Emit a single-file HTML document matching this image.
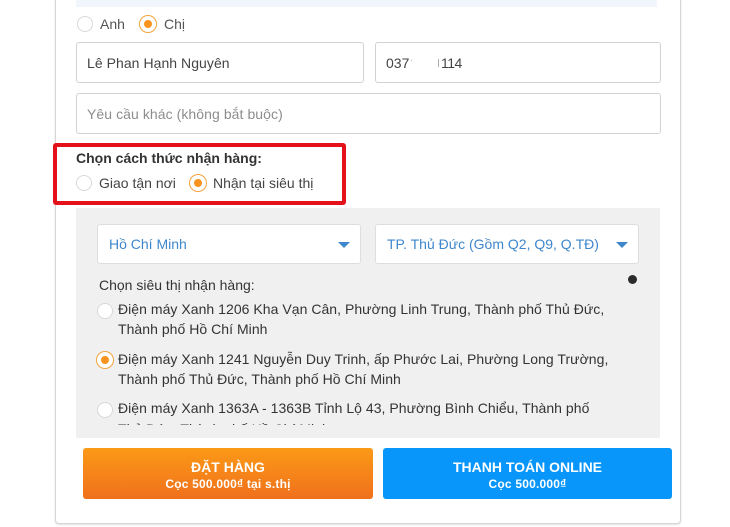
<!DOCTYPE html>
<html lang="vi">
<head>
<meta charset="utf-8">
<style>
html,body{margin:0;padding:0;background:#fff}
body{width:730px;height:527px;position:relative;overflow:hidden;font-family:"Liberation Sans",Arial,sans-serif;font-size:14px;color:#333}
#w{position:absolute;left:0;top:0;width:730px;height:527px;overflow:hidden;filter:blur(.35px)}
.a{position:absolute}
.t{position:absolute;white-space:nowrap;line-height:20px}
.s{letter-spacing:.04px}
.box{position:absolute;box-sizing:border-box;background:#fff;border:1px solid #d2d2d2;border-radius:3px}
.r{position:absolute;box-sizing:border-box;width:16px;height:16px;border-radius:50%;background:#fff;border:1px solid #d8d8d8}
.r.on{width:18px;height:18px;border:1.5px solid #f3a43f;margin:-1px 0 0 -1px}
.r.on:after{content:"";position:absolute;left:3.5px;top:3.5px;width:8px;height:8px;border-radius:50%;background:#f7931e}
.arr{position:absolute;width:0;height:0;border-left:6px solid transparent;border-right:6px solid transparent;border-top:6px solid #3f87cc}
.btn{position:absolute;border-radius:3px;color:#fff;text-align:center;font-weight:bold;box-sizing:border-box}
.btn b{display:block;font-size:14px;line-height:18px;margin-top:10px}
.btn span{display:block;font-size:12px;line-height:16px;letter-spacing:.2px}
</style>
</head>
<body>
<div id="w">
<div class="a" style="left:55px;top:-10px;width:626px;height:534px;box-sizing:border-box;border:1px solid #d6d6d6;border-radius:4px;background:#fff;box-shadow:0 1px 2px rgba(0,0,0,.12)"></div>
<div class="a" style="left:76px;top:0;width:581px;height:7px;background:#f1f6fd"></div>

<div class="r" style="left:77px;top:16px"></div>
<div class="t" style="left:100px;top:14px;color:#555">Anh</div>
<div class="r on" style="left:140px;top:16px"></div>
<div class="t" style="left:164px;top:14px;color:#555">Chị</div>

<div class="box" style="left:76px;top:42px;width:288px;height:41px"></div>
<div class="t" style="left:87px;top:53px;color:#444;letter-spacing:.05px">Lê Phan Hạnh Nguyên</div>
<div class="box" style="left:375px;top:42px;width:286px;height:41px"></div>
<div class="t" style="left:386px;top:53px;color:#444">037</div>
<div class="t" style="left:410px;top:53px;color:#999;width:2px;height:10px;overflow:hidden">1</div>
<div class="a" style="left:438px;top:59px;width:1px;height:8px;background:#aaa"></div>
<div class="t" style="left:441px;top:53px;color:#444;letter-spacing:-.5px">114</div>

<div class="box" style="left:76px;top:93px;width:585px;height:41px"></div>
<div class="t" style="left:87px;top:104px;color:#8d8d8d;letter-spacing:.07px">Yêu cầu khác (không bắt buộc)</div>

<div class="a" style="left:53px;top:143px;width:293px;height:62px;box-sizing:border-box;border:4px solid #e4111b;border-radius:3px"></div>
<div class="t" style="left:76px;top:148px;font-weight:bold;color:#333">Chọn cách thức nhận hàng:</div>
<div class="r" style="left:76px;top:175px"></div>
<div class="t" style="left:99px;top:173px;color:#444">Giao tận nơi</div>
<div class="r on" style="left:190px;top:175px"></div>
<div class="t" style="left:213px;top:173px;color:#444">Nhận tại siêu thị</div>

<div class="a" style="left:76px;top:208px;width:584px;height:230px;background:#f0f0f0"></div>

<div class="box" style="left:97px;top:224px;width:264px;height:40px;border-color:#dedede"></div>
<div class="t" style="left:109px;top:234px;color:#3f87cc">Hồ Chí Minh</div>
<div class="arr" style="left:338px;top:242px"></div>
<div class="box" style="left:375px;top:224px;width:264px;height:40px;border-color:#dedede"></div>
<div class="t" style="left:387px;top:234px;color:#3f87cc">TP. Thủ Đức (Gồm Q2, Q9, Q.TĐ)</div>
<div class="arr" style="left:616px;top:242px"></div>

<div class="a" style="left:628px;top:275px;width:9px;height:9px;border-radius:50%;background:#2b2b2b"></div>

<div class="t" style="left:99px;top:275px;color:#333">Chọn siêu thị nhận hàng:</div>
<div class="r" style="left:97px;top:303px"></div>
<div class="t s" style="left:118px;top:299px">Điện máy Xanh 1206 Kha Vạn Cân, Phường Linh Trung, Thành phố Thủ Đức,</div>
<div class="t s" style="left:118px;top:319px">Thành phố Hồ Chí Minh</div>
<div class="r on" style="left:97px;top:352px"></div>
<div class="t s" style="left:118px;top:349px">Điện máy Xanh 1241 Nguyễn Duy Trinh, ấp Phước Lai, Phường Long Trường,</div>
<div class="t s" style="left:118px;top:369px">Thành phố Thủ Đức, Thành phố Hồ Chí Minh</div>
<div class="r" style="left:97px;top:402px"></div>
<div class="a" style="left:97px;top:395px;width:540px;height:30px;overflow:hidden">
  <div class="t s" style="left:21px;top:3px">Điện máy Xanh 1363A - 1363B Tỉnh Lộ 43, Phường Bình Chiểu, Thành phố</div>
  <div class="t s" style="left:21px;top:24px">Thủ Đức, Thành phố Hồ Chí Minh</div>
</div>

<div class="btn" style="left:83px;top:448px;width:290px;height:51px;background:linear-gradient(#fb9a17,#f0701c)"><b>ĐẶT HÀNG</b><span>Cọc 500.000₫ tại s.thị</span></div>
<div class="btn" style="left:383px;top:448px;width:289px;height:51px;background:#0896fb"><b>THANH TOÁN ONLINE</b><span>Cọc 500.000₫</span></div>
</div>
</body>
</html>
